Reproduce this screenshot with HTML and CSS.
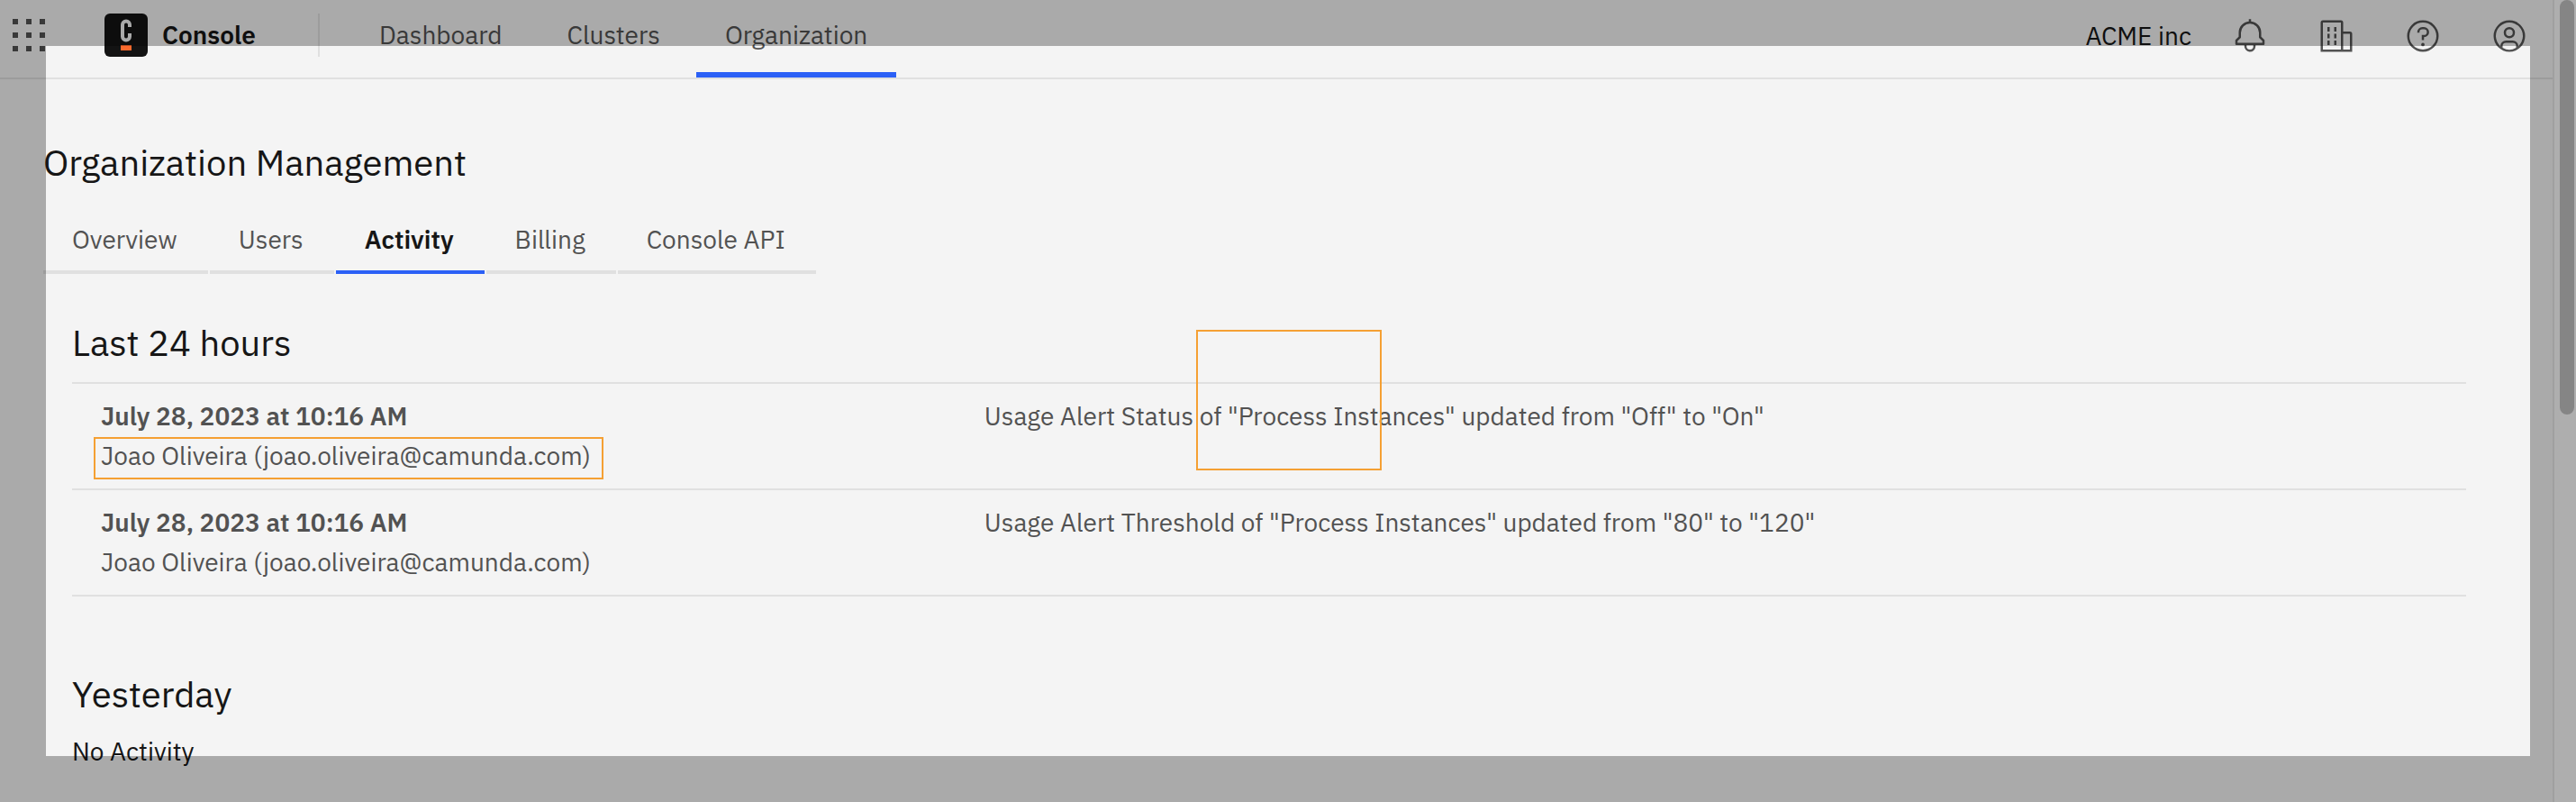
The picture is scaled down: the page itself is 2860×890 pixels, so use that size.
FILE: index.html
```html
<!DOCTYPE html>
<html lang="en">
<head>
<meta charset="utf-8">
<title>Console – Organization Management</title>
<link rel="stylesheet" href="styles.css">
</head>
<body>
<div class="page">
  <header class="header">
    <button class="icon-button switcher" type="button" aria-label="Apps">
      <svg class="icon" viewBox="0 0 36 36"><path d="M0 0h6v6H0zM15 0h6v6h-6zM30 0h6v6h-6zM0 15h6v6H0zM15 15h6v6h-6zM30 15h6v6h-6zM0 30h6v6H0zM15 30h6v6h-6zM30 30h6v6h-6z"/></svg>
    </button>
    <a class="brand" href="#">
      <svg class="logo" viewBox="0 0 48 48" aria-hidden="true">
        <rect width="48" height="48" rx="6" fill="#131313"/>
        <path d="M28 15v-2.500a4 4 0 0 0-8 0v13a4 4 0 0 0 8 0V22" fill="none" stroke="#f4f4f4" stroke-width="4"/>
        <path d="M18 35h12v6H18z" fill="#fc6a2d"/>
      </svg>
      <span>Console</span>
    </a>
    <nav class="nav" aria-label="Main">
      <a class="nav-link" href="#">Dashboard</a>
      <a class="nav-link" href="#">Clusters</a>
      <a class="nav-link nav-current" href="#" aria-current="page">Organization</a>
    </nav>
    <div class="actions">
      <span class="org">ACME inc</span>
      <button class="icon-button" type="button" aria-label="Notifications">
        <svg class="icon-lg" viewBox="0 0 32 32"><path d="M28.707 19.293 26 16.586V13a10.014 10.014 0 0 0-9-9.950V1h-2v2.050A10.014 10.014 0 0 0 6 13v3.586l-2.707 2.707A1 1 0 0 0 3 20v3a1 1 0 0 0 1 1h7v.777a5.152 5.152 0 0 0 4.500 5.199A5.006 5.006 0 0 0 21 25v-1h7a1 1 0 0 0 1-1v-3a1 1 0 0 0-.293-.707ZM19 25a3 3 0 0 1-6 0v-1h6Zm8-3H5v-1.586l2.707-2.707A1 1 0 0 0 8 17v-4a8 8 0 0 1 16 0v4a1 1 0 0 0 .293.707L27 20.414Z"/></svg>
      </button>
      <button class="icon-button" type="button" aria-label="Organizations">
        <svg class="icon-lg" viewBox="0 0 32 32"><path d="M8 8h2v4H8zM8 14h2v4H8zM14 8h2v4h-2zM14 14h2v4h-2zM8 20h2v4H8zM14 20h2v4h-2z"/><path d="M30 14a2 2 0 0 0-2-2h-6V4a2 2 0 0 0-2-2H4a2 2 0 0 0-2 2v26h28ZM4 4h16v24H4Zm18 24V14h6v14Z"/></svg>
      </button>
      <button class="icon-button" type="button" aria-label="Help">
        <svg class="icon-lg" viewBox="0 0 32 32"><path d="M16 2a14 14 0 1 0 14 14A14 14 0 0 0 16 2Zm0 26a12 12 0 1 1 12-12 12 12 0 0 1-12 12Z"/><circle cx="16" cy="23.500" r="1.500"/><path d="M17 8h-1.500a4.490 4.490 0 0 0-4.500 4.500v.5h2v-.5a2.500 2.500 0 0 1 2.500-2.500H17a2.500 2.500 0 0 1 0 5h-2v4.500h2V17a4.500 4.500 0 0 0 0-9Z"/></svg>
      </button>
      <button class="icon-button" type="button" aria-label="Account">
        <svg class="icon-lg" viewBox="0 0 32 32"><path d="M16 8a5 5 0 1 0 5 5 5 5 0 0 0-5-5Zm0 8a3 3 0 1 1 3-3 3 3 0 0 1-3 3Z"/><path d="M16 2a14 14 0 1 0 14 14A14 14 0 0 0 16 2Zm-6 24.377V25a3 3 0 0 1 3-3h6a3 3 0 0 1 3 3v1.377a11.899 11.899 0 0 1-12 0Zm13.993-1.451A5.002 5.002 0 0 0 19 20h-6a5.002 5.002 0 0 0-4.992 4.926 12 12 0 1 1 15.985 0Z"/></svg>
      </button>
    </div>
  </header>

  <main class="main">
    <h1 class="title">Organization Management</h1>
    <div class="tabs" role="tablist">
      <button class="tab" type="button" role="tab">Overview</button>
      <button class="tab" type="button" role="tab">Users</button>
      <button class="tab tab-selected" type="button" role="tab" aria-selected="true">Activity</button>
      <button class="tab" type="button" role="tab">Billing</button>
      <button class="tab" type="button" role="tab">Console API</button>
    </div>

    <section class="group">
      <h2 class="group-title">Last 24 hours</h2>
      <table class="log">
        <tr>
          <td class="who"><strong>July 28, 2023 at 10:16 AM</strong><br><span class="marked">Joao Oliveira (joao.oliveira@camunda.com)</span></td>
          <td>Usage Alert Status of "Process Instances" updated from "Off" to "On"<span class="marker"></span></td>
        </tr>
        <tr>
          <td class="who"><strong>July 28, 2023 at 10:16 AM</strong><br>Joao Oliveira (joao.oliveira@camunda.com)</td>
          <td>Usage Alert Threshold of "Process Instances" updated from "80" to "120"</td>
        </tr>
      </table>
    </section>

    <section class="group">
      <h2 class="group-title">Yesterday</h2>
      <p class="empty">No Activity</p>
    </section>
  </main>
</div>
<div class="scrollbar"><div class="thumb"></div></div>
<div class="spotlight"></div>
</body>
</html>
```
FILE: styles.css
```css
* { box-sizing: border-box; }

body {
  margin: 0;
  min-height: 100vh;
  display: flex;
  position: relative;
  overflow: hidden;
  background: #f4f4f4;
  color: #161616;
  font: 400 28px/44px "IBM Plex Sans", "Noto Sans", sans-serif;
}

a { color: inherit; text-decoration: none; }

button {
  border: 0;
  padding: 0;
  background: none;
  color: inherit;
  font: inherit;
}

.page { flex: 1; min-width: 0; }

.header {
  display: flex;
  height: 88px;
  border-bottom: 2px solid #e0e0e0;
}

.icon-button {
  display: flex;
  align-items: center;
  justify-content: center;
  width: 96px;
  height: 80px;
  fill: #525252;
}

.switcher { width: 64px; height: 78px; }
.icon { width: 36px; height: 36px; }
.icon-lg { width: 40px; height: 40px; }

.brand {
  display: flex;
  align-items: center;
  gap: 16px;
  height: 48px;
  width: 239px;
  margin: 15px 34px 0 52px;
  border-right: 2px solid #e0e0e0;
  font-weight: 600;
}

.logo { width: 48px; height: 48px; }

.nav { display: flex; gap: 8px; }

.nav-link {
  padding: 17px 32px 0;
  border-bottom: 6px solid transparent;
  color: #525252;
}

.nav-current { border-color: #2b60f6; }

.actions { display: flex; margin-left: auto; }
.org { padding: 18px 17px 0 0; }

.main { padding: 64px 96px 0 48px; }

.title, .group-title {
  margin: 0;
  font-size: 40px;
  font-weight: 400;
  line-height: 56px;
}

.tabs { display: flex; gap: 2px; margin-top: 36px; }

.tab {
  padding: 0 34px 12px 32px;
  border-bottom: 4px solid #e0e0e0;
  color: #525252;
}

.tab-selected {
  border-color: #2b60f6;
  color: #161616;
  font-weight: 600;
}

.group { padding: 48px 0 0 32px; }
.group + .group { padding-top: 80px; }

.log {
  width: 100%;
  margin-top: 16px;
  table-layout: fixed;
  border-collapse: collapse;
  color: #525252;
}

.log td {
  position: relative;
  padding: 14px 32px;
  border: solid #e0e0e0;
  border-width: 2px 0;
  vertical-align: top;
}

.log .who { width: 36.9%; }
.log strong { font-weight: 600; }

.marked { position: relative; }

.marked::after {
  content: "";
  position: absolute;
  inset: -2px -14px -8px -8px;
  border: 2px solid #f5a033;
}

.marker {
  position: absolute;
  top: -60px;
  left: 267px;
  width: 206px;
  height: 156px;
  border: 2px solid #f5a033;
}

.empty { margin: 14px 0 0; }

.scrollbar {
  width: 26px;
  padding: 0 2px 0 6px;
  border-left: 2px solid #e6e6e6;
  background: #fafafa;
}

.thumb { height: 460px; border-radius: 8px; background: #bfbfbf; }

.spotlight {
  position: absolute;
  inset: 51px;
  box-shadow: 0 0 0 100px rgba(0, 0, 0, 0.3);
  pointer-events: none;
}
```
